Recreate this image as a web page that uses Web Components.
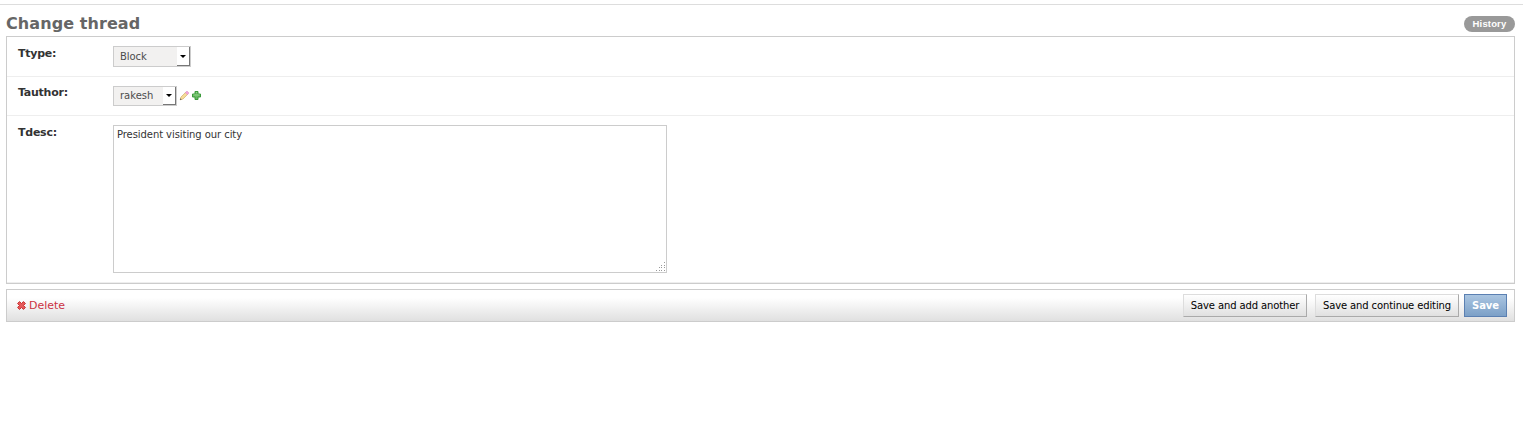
<!DOCTYPE html>
<html lang="en">
<head>
<meta charset="utf-8">
<title>Change thread</title>
<style>
body{margin:0;background:#fff;color:#333;font-family:"DejaVu Sans",sans-serif;font-size:11px}
</style>
</head>
<body>
<admin-page>
  <page-header slot="header" heading="Change thread"></page-header>
  <form-row label="Ttype:" style="height:39px;--label-top:10px"><select-box value="Block" style="width:78px;height:21px;letter-spacing:-.06px"></select-box></form-row>
  <form-row label="Tauthor:" style="height:38px"><select-box value="rakesh" style="width:64px;height:20px;--line:17px"></select-box><tool-icons></tool-icons></form-row>
  <form-row label="Tdesc:" style="height:166px;--label-top:10px"><text-area>President visiting our city</text-area></form-row>
  <submit-row slot="footer">
    <push-button style="width:124px;margin-right:8px">Save and add another</push-button>
    <push-button style="width:144px;margin-right:5px">Save and continue editing</push-button>
    <push-button primary style="width:43px">Save</push-button>
  </submit-row>
</admin-page>
<script>
function define(name, render) {
  customElements.define(name, class extends HTMLElement {
    constructor() {
      super();
      this.attachShadow({mode: 'open'}).innerHTML = '<style>*{box-sizing:border-box}</style>' + render(this);
    }
  });
}

define('admin-page', () => `<style>
:host{display:block;padding:4px 8px 0 6px}
.rule{height:1px;background:#ddd;margin:0 -8px 0 -6px}
.module{border:1px solid #ccc;height:248px}
</style><div class="rule"></div><slot name="header"></slot><div class="module"><slot></slot></div><slot name="footer"></slot>`);

define('page-header', el => `<style>
:host{display:flex;height:31px;justify-content:space-between}
h1{margin:9px 0 0;font-size:16px;line-height:19px;font-weight:bold;color:#666;letter-spacing:.08px}
.history{margin-top:11px;width:51px;height:16px;border-radius:8px;background:#999;color:#fff;font:bold 9.5px/16px "Liberation Sans",sans-serif;letter-spacing:.15px;text-align:center}
</style><h1>${el.getAttribute('heading')}</h1><div class="history">History</div>`);

define('form-row', el => `<style>
:host{display:flex;box-sizing:content-box;border-bottom:1px solid #eee;align-items:flex-start}
label{width:95px;margin:var(--label-top,9px) 0 0 11px;font-weight:bold;line-height:14px;color:#333;letter-spacing:-.25px}
.field{display:flex;margin-top:9px}
</style><label>${el.getAttribute('label')}</label><div class="field"><slot></slot></div>`);

define('select-box', el => `<style>
:host{display:flex;box-sizing:border-box;border:1px solid #ccc;background:#f2f1f0;color:#4c4c4c;font-size:10px}
span{flex:1;padding-left:6px;line-height:var(--line,19px)}
.arrow{width:13px;background:#fff;border-right:1px solid #777;border-bottom:1px solid #777;display:flex;align-items:center;justify-content:center}
svg{display:block}
</style><span>${el.getAttribute('value')}</span><div class="arrow"><svg width="6" height="3"><path d="M0 0h6L3 3z" fill="#000"/></svg></div>`);

define('tool-icons', () => `<style>
:host{display:flex;margin:5px 0 0 2px;gap:2px}
svg{display:block}
svg:first-of-type{margin-top:-1px}
</style>
<svg width="11" height="11" viewBox="0 0 11 11"><path d="M1.200 9.800l.7-2.700L7 2l2 2-5 5z" fill="#f6dc98" stroke="#c9a45c" stroke-width=".6"/><path d="M6.300 2.600L8 1l2 2-1.600 1.700z" fill="#f3a4dc" stroke="#d68bc3" stroke-width=".5"/><path d="M1 10l.5-1.700L2.700 9.500z" fill="#555"/></svg>
<svg width="9" height="9" viewBox="0 0 9 9"><path d="M3 .5h3V3h2.500v3H6v2.500H3V6H.5V3H3z" fill="#67b961" stroke="#3b9a3b"/><path d="M4 1.500h1M1.500 4h6" stroke="#93d28b"/></svg>`);

define('text-area', () => `<style>
:host{display:block;position:relative;box-sizing:border-box;width:554px;height:148px;border:1px solid #ccc;padding:2px 3px;font-size:10px;line-height:13px;color:#333;letter-spacing:-.07px}
svg{position:absolute;right:0;bottom:0}
</style><slot></slot><svg width="10" height="10" shape-rendering="crispEdges"><path d="M8 0h1v1h-1zM5 3h1v1h-1zM8 3h1v1h-1zM3 5h1v1h-1zM5 5h1v1h-1zM8 5h1v1h-1zM0 8h1v1h-1zM3 8h1v1h-1zM5 8h1v1h-1zM8 8h1v1h-1z" fill="#999"/></svg>`);

define('submit-row', () => `<style>
:host{display:flex;box-sizing:border-box;height:33px;margin-top:5px;border:1px solid #ccc;background:linear-gradient(#fff 25%,#e0e0e0);padding:4px 7px 0 10px}
.delete{display:flex;flex:1;color:#c34;line-height:14px;margin-top:5px;letter-spacing:-.04px}
svg{margin:2px 3px 0 0}
</style><div class="delete"><svg width="9" height="9" viewBox="0 0 9 9"><path d="M2.500.6l2 1.900 2-1.900 1.900 1.900-1.900 2 1.900 2-1.900 1.900-2-1.900-2 1.900-1.900-1.900 1.900-2-1.900-2z" fill="#e65a5a" stroke="#c72e2e"/></svg><span>Delete</span></div><slot></slot>`);

define('push-button', () => `<style>
:host{display:block;box-sizing:border-box;height:23px;border:1px solid;border-color:#ddd #aaa #aaa #ddd;background:linear-gradient(#fff,#e0e0e0);color:#000;font-size:10px;line-height:21px;text-align:center;letter-spacing:-.12px}
:host([primary]){border-color:#5b80b2;background:linear-gradient(#aac5e1,#7ca0c7);color:#fff;font-weight:bold}
</style><slot></slot>`);
</script>
</body>
</html>
